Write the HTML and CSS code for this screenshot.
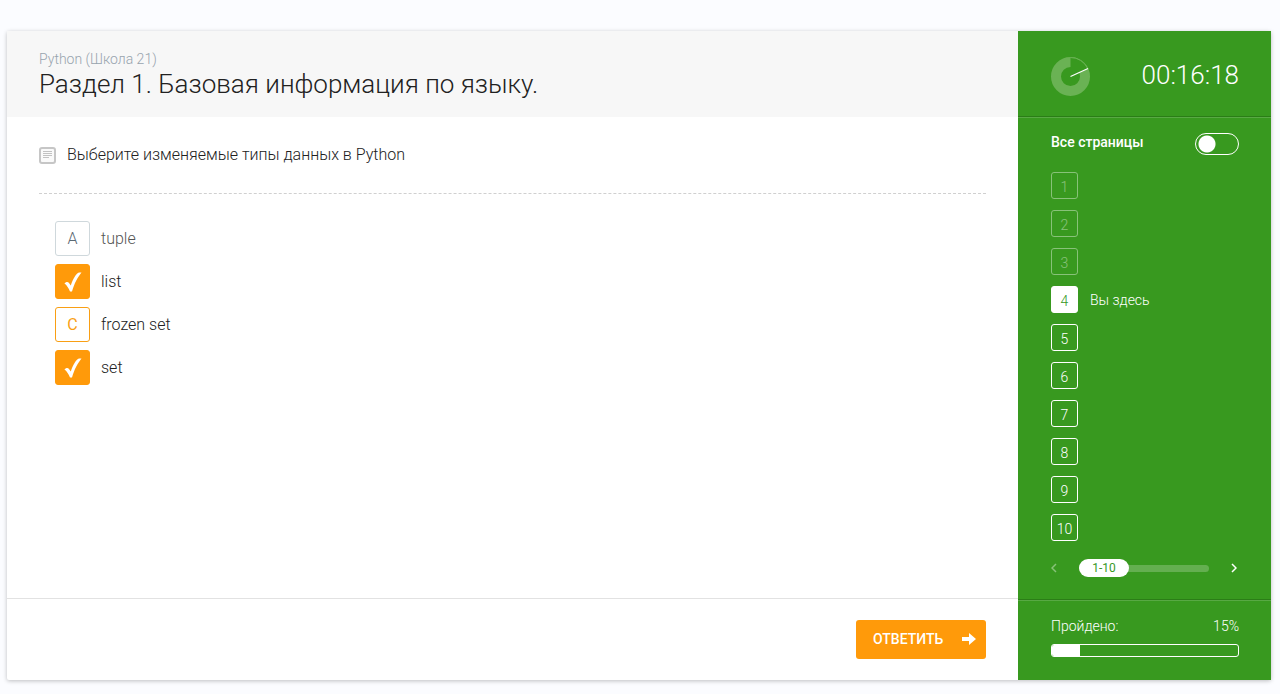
FILE: index.html
```html
<!DOCTYPE html>
<html lang="ru">
<head>
<meta charset="utf-8">
<meta name="viewport" content="width=device-width, initial-scale=1">
<title>Python (Школа 21)</title>
<link rel="stylesheet" href="styles.css">
</head>
<body>
<div class="card">
  <form class="main">
    <header class="header">
      <p class="course">Python (Школа 21)</p>
      <h1 class="title">Раздел 1. Базовая информация по языку.</h1>
    </header>
    <main class="content">
      <div class="question">
        <svg class="note" viewBox="0 0 17 17" aria-hidden="true"><rect x="1" y="1" width="15" height="15" rx="2" fill="#fafafa" stroke="#c6c6c6" stroke-width="2"/><path d="M4 4.500h9M4 6.500h9M4 8.500h9M4 10.500h6" stroke="#c2c2c2"/></svg>
        <h2 class="question-text" id="question">Выберите изменяемые типы данных в Python</h2>
      </div>
      <div class="options" role="group" aria-labelledby="question">
        <label class="option option-muted"><span class="box"><input class="check" type="checkbox"><span class="mark">A</span></span>tuple</label>
        <label class="option"><span class="box"><input class="check" type="checkbox" checked><svg class="mark tick" viewBox="0 0 18 20" aria-hidden="true"><path d="M0.500 11.500C2 9.500 4 9.500 5 11L6.800 13.500C9 7 12 1.500 15 0.500L17.500 0.500C13.500 5.500 10.500 11 8 19.500H6C4.500 16 3 13.500 0.500 11.500Z"/></svg></span>list</label>
        <label class="option"><span class="box"><input class="check check-hot" type="checkbox"><span class="mark mark-hot">C</span></span>frozen set</label>
        <label class="option"><span class="box"><input class="check" type="checkbox" checked><svg class="mark tick" viewBox="0 0 18 20" aria-hidden="true"><path d="M0.500 11.500C2 9.500 4 9.500 5 11L6.800 13.500C9 7 12 1.500 15 0.500L17.500 0.500C13.500 5.500 10.500 11 8 19.500H6C4.500 16 3 13.500 0.500 11.500Z"/></svg></span>set</label>
      </div>
    </main>
    <footer class="footer">
      <button class="submit" type="button">ОТВЕТИТЬ
        <svg class="arrow" viewBox="0 0 14 12" aria-hidden="true"><path d="M0 4H7V0L14 6L7 12V8H0Z"/></svg>
      </button>
    </footer>
  </form>
  <aside class="side">
    <div class="timer">
      <svg class="clock" viewBox="0 0 39 39" aria-hidden="true">
        <circle cx="19.500" cy="19.500" r="14.500" fill="none" stroke="#6ab254" stroke-width="10"/>
        <path d="M19.500 19.500V0.500A19 19 0 0 1 36.800 11.700Z" fill="#38991f"/>
        <path d="M19.500 0.500A19 19 0 0 1 36.800 11.700" fill="none" stroke="#6ab254"/>
        <path d="M19.500 19.500L37 11.500" stroke="#fff" stroke-width="1.300"/>
      </svg>
      <time class="time">00:16:18</time>
    </div>
    <div class="nav">
      <label class="all">Все страницы<input class="switch" type="checkbox" role="switch"></label>
      <ol class="pages">
        <li class="page"><button class="num" type="button" disabled>1</button></li>
        <li class="page"><button class="num" type="button" disabled>2</button></li>
        <li class="page"><button class="num" type="button" disabled>3</button></li>
        <li class="page"><button class="num num-current" type="button" aria-current="page">4</button><span>Вы здесь</span></li>
        <li class="page"><button class="num" type="button">5</button></li>
        <li class="page"><button class="num" type="button">6</button></li>
        <li class="page"><button class="num" type="button">7</button></li>
        <li class="page"><button class="num" type="button">8</button></li>
        <li class="page"><button class="num" type="button">9</button></li>
        <li class="page"><button class="num" type="button">10</button></li>
      </ol>
      <div class="pager">
        <button class="step" type="button" aria-label="Назад" disabled><svg class="chevron" viewBox="0 0 6 10" aria-hidden="true"><path d="M5 1L1 5L5 9"/></svg></button>
        <div class="slider">
          <input class="range" type="range" min="1" max="3" value="1" aria-label="Диапазон страниц">
          <span class="range-label">1-10</span>
        </div>
        <button class="step" type="button" aria-label="Вперёд"><svg class="chevron" viewBox="0 0 6 10" aria-hidden="true"><path d="M1 1L5 5L1 9"/></svg></button>
      </div>
    </div>
    <div class="done">
      <div class="done-row"><label for="done">Пройдено:</label><span>15%</span></div>
      <progress class="bar" id="done" value="15" max="100"></progress>
    </div>
  </aside>
</div>
</body>
</html>
```
FILE: styles.css
```css
* { box-sizing: border-box; }

body {
  margin: 0;
  min-height: 100vh;
  padding: 31px 9px 14px 7px;
  display: flex;
  background: #fbfcff;
  font-family: Roboto, "Liberation Sans", sans-serif;
  font-weight: 300;
  color: #212121;
}

h1, h2, p, ol { margin: 0; padding: 0; font-weight: 300; }
ol { list-style: none; }
button, input { font: inherit; margin: 0; }
button { cursor: pointer; }

.card {
  flex: 1;
  display: flex;
  background: #fff;
  border-radius: 2px;
  box-shadow: 0 1px 4px rgba(0, 0, 0, 0.25);
}

.main { flex: 1; min-width: 0; display: flex; flex-direction: column; }

.header { height: 86px; padding: 19px 32px 0; background: #f7f7f7; }
.course { font-size: 14px; line-height: 18px; color: #98a4ae; }
.title { font-size: 26px; line-height: 32px; }

.content { flex: 1; padding: 0 32px 32px; }
.question {
  display: flex;
  align-items: center;
  gap: 11px;
  height: 77px;
  border-bottom: 1px dashed #d0d0d0;
}
.note { width: 17px; height: 17px; }
.question-text { font-size: 16px; line-height: 24px; }

.options { display: flex; flex-direction: column; align-items: flex-start; gap: 8px; padding: 27px 16px 0; }
.option { display: flex; align-items: center; gap: 11px; font-size: 16px; line-height: 24px; cursor: pointer; }
.option-muted { color: #555; }
.box { display: grid; width: 35px; height: 35px; }
.check, .mark { grid-area: 1 / 1; }
.check {
  appearance: none;
  width: 100%;
  height: 100%;
  border: 1px solid #cfd8dc;
  border-radius: 3px;
  background: #fff;
}
.check-hot { border-color: #f99f14; }
.check:checked { border-color: #ff9a0a; background: #ff9a0a; }
.mark { place-self: center; color: #5b6872; pointer-events: none; }
.mark-hot { color: #f99f14; font-weight: 400; }
.tick { width: 18px; height: 20px; fill: #fff; }

.footer { display: flex; justify-content: flex-end; padding: 21px 32px; border-top: 1px solid #e2e2e2; }
.submit {
  display: flex;
  align-items: center;
  justify-content: space-between;
  width: 130px;
  height: 39px;
  padding: 0 10px 2px 17px;
  border: 0;
  border-radius: 3px;
  background: #ff9a0a;
  color: #fff;
  font-size: 14px;
  font-weight: 500;
}
.arrow { width: 14px; height: 12px; fill: #fff; }

.side { width: 253px; display: flex; flex-direction: column; background: #38991f; color: #fff; font-size: 14px; font-weight: 400; }
.timer {
  display: flex;
  align-items: center;
  justify-content: space-between;
  height: 86px;
  padding: 5px 32px 0 33px;
  border-bottom: 1px solid #2b7d17;
}
.clock { width: 39px; height: 39px; }
.time { padding-bottom: 2px; font-size: 26px; font-weight: 300; line-height: 32px; }

.nav { flex: 1; padding: 15px 32px 0 33px; border-top: 1px solid #58a944; }
.all { display: flex; justify-content: space-between; font-weight: 500; line-height: 18px; cursor: pointer; }
.switch {
  appearance: none;
  width: 44px;
  height: 22px;
  border: 1px solid #fff;
  border-radius: 11px;
  background: radial-gradient(circle at 11px 50%, #fff 8px, transparent 9px);
}

.pages { display: flex; flex-direction: column; gap: 11px; margin-top: 17px; }
.page { display: flex; align-items: center; gap: 12px; }
.num {
  width: 27px;
  height: 27px;
  padding: 2px 0 0;
  border: 1px solid #fff;
  border-radius: 3px;
  background: transparent;
  color: #fff;
}
.num:disabled { opacity: 0.4; font-weight: 300; }
.num-current { background: #fff; color: #38991f; }

.pager { display: flex; align-items: center; justify-content: space-between; margin-top: 18px; }
.step { display: flex; padding: 0 2px 0 0; border: 0; background: none; }
.step:disabled { padding: 0; opacity: 0.4; }
.chevron { width: 6px; height: 10px; fill: none; stroke: #fff; stroke-width: 1.5; }
.slider { display: grid; align-items: center; width: 130px; }
.range, .range-label { grid-area: 1 / 1; }
.range { appearance: none; width: 100%; height: 18px; background: none; }
.range::-webkit-slider-runnable-track { height: 7px; border-radius: 4px; background: #64af50; }
.range::-webkit-slider-thumb { appearance: none; width: 50px; height: 18px; margin-top: -6px; border-radius: 9px; background: #fff; }
.range-label { z-index: 1; width: 50px; text-align: center; color: #38991f; font-size: 12px; line-height: 16px; pointer-events: none; }

.done { height: 81px; padding: 16px 32px 0 33px; border-top: 1px solid #2b7d17; box-shadow: inset 0 1px #58a944; font-weight: 300; }
.done-row { display: flex; justify-content: space-between; line-height: 20px; }
.bar {
  display: block;
  appearance: none;
  width: 100%;
  height: 13px;
  margin-top: 8px;
  border: 1px solid #fff;
  border-radius: 3px;
  overflow: hidden;
}
.bar::-webkit-progress-bar { background: transparent; }
.bar::-webkit-progress-value { background: #fff; }
```
